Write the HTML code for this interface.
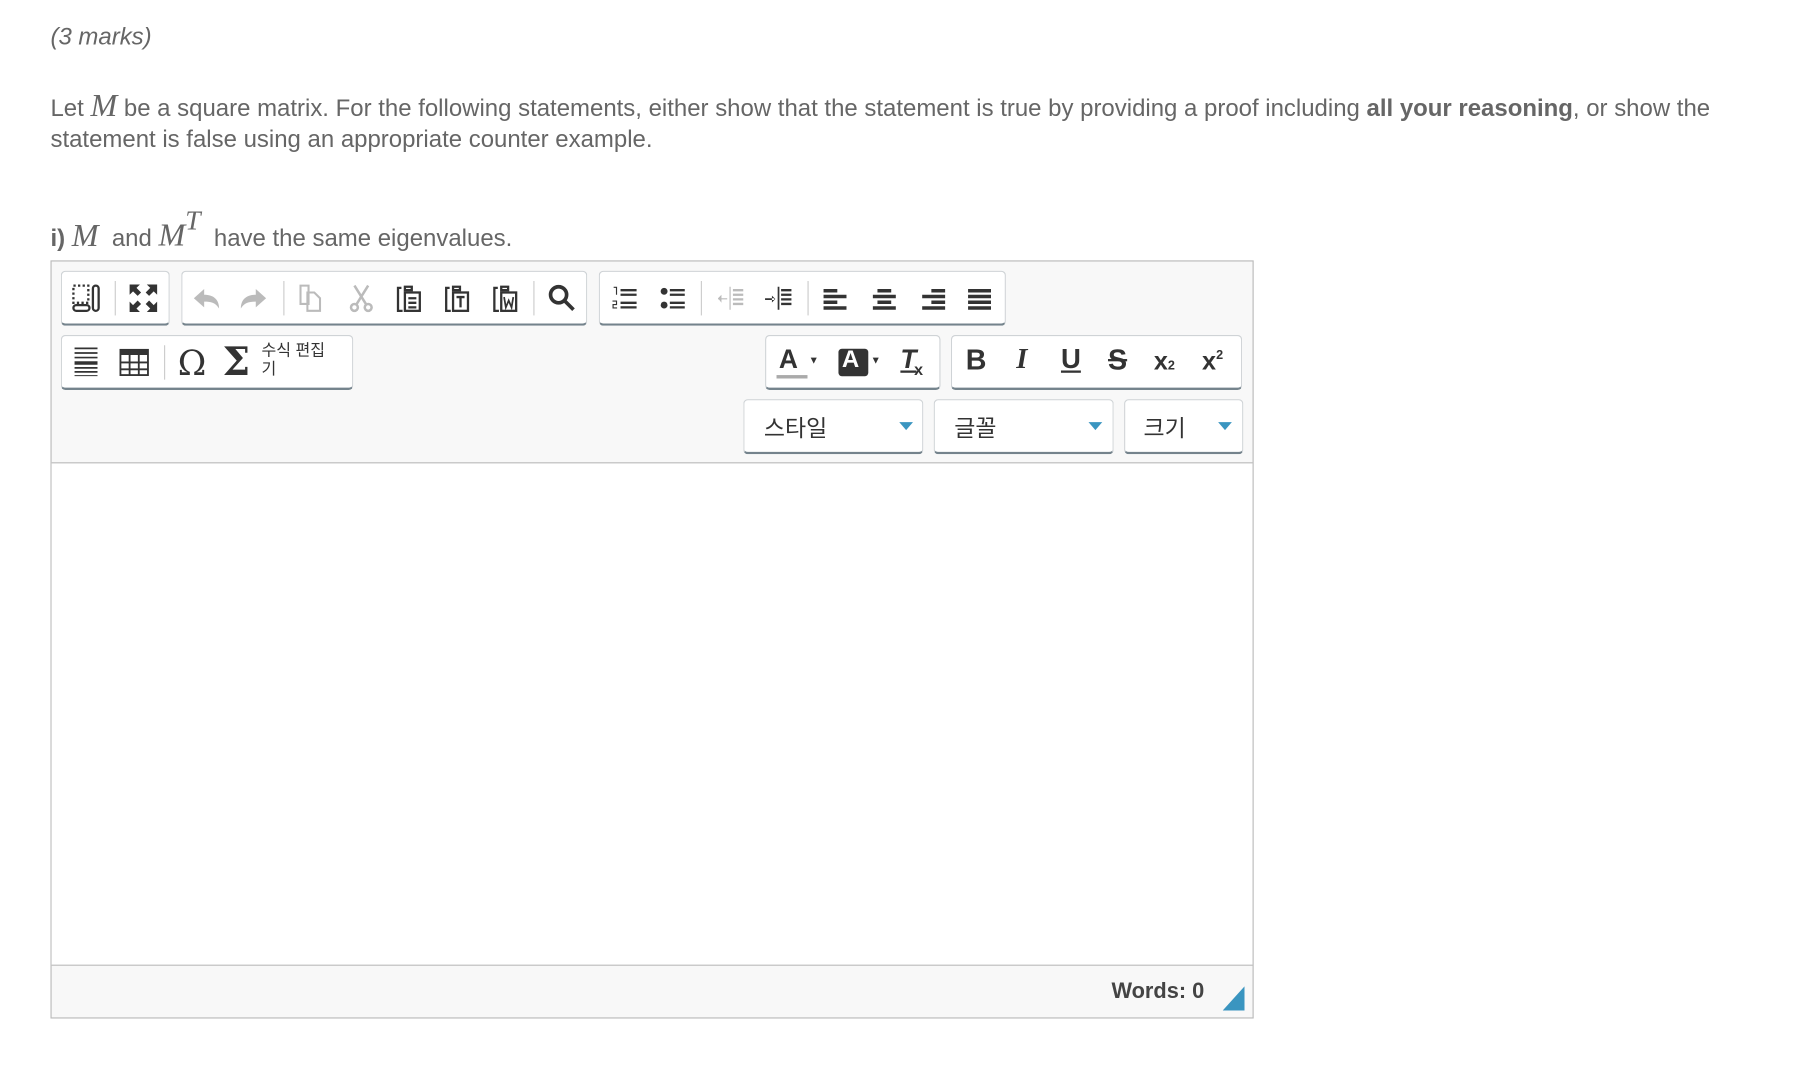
<!DOCTYPE html>
<html><head><meta charset="utf-8">
<style>
html,body{margin:0;padding:0;background:#fff;width:1798px;height:1068px;overflow:hidden}
#w{position:absolute;left:0;top:0;width:1570px;height:931px;transform:scale(1.147);transform-origin:0 0;font-family:"Liberation Sans","Noto Sans CJK KR",sans-serif;color:#666}
.t{position:absolute;font-size:20.9px;white-space:nowrap}
.m{font-family:"Liberation Serif",serif;font-style:italic;font-size:28px}
#ed{position:absolute;left:44px;top:227px;width:1047px;height:659px;border:1px solid #bbb;background:#f8f8f8}
#ct{position:absolute;top:403px;height:437px;background:#fff;border-top:1px solid #bbb;border-bottom:1px solid #bbb;left:45px;width:1047px}
.g{position:absolute;background:#fff;border:1px solid #cfd3d6;border-bottom:2px solid #74838c;border-radius:4px;box-sizing:border-box}
.i{position:absolute;width:26px;height:26px}
.sep{position:absolute;width:1px;height:30px;background:#ccc}
.k{position:absolute;font-size:20px;color:#333;font-family:"Liberation Sans","Noto Sans CJK KR",sans-serif}
.tri{position:absolute;width:0;height:0;border-left:6px solid transparent;border-right:6px solid transparent;border-top:7px solid #3a95c0}
</style></head><body><div id="w">
<div class="t" style="left:44px;top:21px;font-style:italic">(3 marks)</div>
<div class="t" style="left:44px;top:77px">Let <span class="m">M</span> be a square matrix. For the following statements, either show that the statement is true by providing a proof including <b>all your reasoning</b>, or show the</div>
<div class="t" style="left:44px;top:110px">statement is false using an appropriate counter example.</div>
<div class="t" style="left:44px;top:184px"><b>i)</b> <span class="m">M</span>&nbsp; and <span class="m">M<sup style="font-size:24px;position:relative;top:-4px">T</sup></span>&nbsp; have the same eigenvalues.</div>

<div id="ed"></div>
<div id="ct"></div>

<div class="g" style="left:53px;top:236px;width:95px;height:48px"></div>
<div class="g" style="left:158px;top:236px;width:354px;height:48px"></div>
<div class="g" style="left:522px;top:236px;width:355px;height:48px"></div>
<div class="g" style="left:53px;top:292px;width:255px;height:48px"></div>
<div class="g" style="left:667px;top:292px;width:153px;height:48px"></div>
<div class="g" style="left:829px;top:292px;width:254px;height:48px"></div>
<div class="g" style="left:648px;top:348px;width:157px;height:48px"></div>
<div class="g" style="left:814px;top:348px;width:157px;height:48px"></div>
<div class="g" style="left:980px;top:348px;width:104px;height:48px"></div>

<div class="sep" style="left:100px;top:245px"></div>
<div class="sep" style="left:247px;top:245px"></div>
<div class="sep" style="left:465px;top:245px"></div>
<div class="sep" style="left:611px;top:245px"></div>
<div class="sep" style="left:704px;top:245px"></div>
<div class="sep" style="left:143px;top:301px"></div>

<!-- row1 -->
<svg class="i" style="left:62px;top:247px" viewBox="0 0 26 26" fill="none" stroke="#333" stroke-width="2"><rect x="2" y="2" width="13" height="15" stroke-dasharray="2 2"/><rect x="2" y="19" width="14" height="5" rx="2.5"/><rect x="19" y="2" width="5" height="22" rx="2.5"/></svg>
<svg class="i" style="left:112px;top:247px" viewBox="0 0 26 26" fill="#333"><path d="M1 1h9l-3 3 4 4-3 3-4-4-3 3zM25 1v9l-3-3-4 4-3-3 4-4-3-3zM1 25v-9l3 3 4-4 3 3-4 4 3 3zM25 25h-9l3-3-4-4 3-3 4 4 3-3z"/></svg>
<svg class="i" style="left:167px;top:247px" viewBox="0 0 26 26" fill="#bbb"><path d="M2 13l9-8v5c8 0 13 4 13 12-3-5-7-6-13-6v5z"/></svg>
<svg class="i" style="left:208px;top:247px" viewBox="0 0 26 26" fill="#bbb"><path d="M24 13l-9-8v5c-8 0-13 4-13 12 3-5 7-6 13-6v5z"/></svg>
<svg class="i" style="left:258px;top:247px" viewBox="0 0 26 26" fill="none" stroke="#bbb" stroke-width="1.8"><path d="M4 2h7v16H4zM10 8h6l5 5v11H10z"/></svg>
<svg class="i" style="left:302px;top:247px" viewBox="0 0 26 26" fill="none" stroke="#bbb" stroke-width="2.2"><path d="M7 2l10 16M19 2L9 18"/><circle cx="7" cy="21" r="3"/><circle cx="19" cy="21" r="3"/></svg>
<svg class="i" style="left:344px;top:247px" viewBox="0 0 26 26" fill="none" stroke="#333" stroke-width="2"><path d="M6 4H3v20h4M9 3h6v3H9z"/><rect x="9" y="8" width="13" height="16"/><path d="M12 13h7M12 17h7M12 21h7"/></svg>
<svg class="i" style="left:386px;top:247px" viewBox="0 0 26 26" fill="none" stroke="#333" stroke-width="2"><path d="M6 4H3v20h4M9 3h6v3H9z"/><rect x="9" y="8" width="13" height="16"/><path d="M12 12h7M15.5 12v9"/></svg>
<svg class="i" style="left:428px;top:247px" viewBox="0 0 26 26" fill="none" stroke="#333" stroke-width="2"><path d="M6 4H3v20h4M9 3h6v3H9z"/><rect x="9" y="8" width="13" height="16"/><path d="M11.5 12l1.5 9 2.5-6 2.5 6 1.5-9" stroke-width="1.5"/></svg>
<svg class="i" style="left:477px;top:247px" viewBox="0 0 26 26" fill="none" stroke="#333" stroke-width="3.2"><circle cx="10" cy="10" r="7"/><path d="M15 15l8 8"/></svg>
<svg class="i" style="left:532px;top:247px" viewBox="0 0 26 26" fill="#333"><path d="M3 3h3v7H5V4H3zM9 5h14v2H9zM9 9h14v2H9zM2 15h4v4H3v2h3v1H2v-4h3v-2H2zM9 16h14v2H9zM9 20h14v2H9z"/></svg>
<svg class="i" style="left:574px;top:247px" viewBox="0 0 26 26" fill="#333"><circle cx="5" cy="7" r="3"/><circle cx="5" cy="19" r="3"/><path d="M10 5h13v2H10zM10 9h13v2H10zM10 16h13v2H10zM10 20h13v2H10z"/></svg>
<svg class="i" style="left:624px;top:247px" viewBox="0 0 26 26" fill="#bbb"><path d="M12 3h1v20h-1zM15 5h9v2h-9zM15 9h9v2h-9zM15 13h9v2h-9zM15 17h9v2h-9zM2 13h8v1H2zM2 13l3-3v7z"/></svg>
<svg class="i" style="left:666px;top:247px" viewBox="0 0 26 26" fill="#333"><path d="M12 3h1.5v20H12zM15 5h9v2h-9zM15 9h9v2h-9zM15 13h9v2h-9zM15 17h9v2h-9zM1 13h8v1.5H1zM10 13.7l-3-3v6z"/></svg>
<svg class="i" style="left:716px;top:247px" viewBox="0 0 26 26" fill="#333"><path d="M2 5h12v3H2zM2 10h20v3H2zM2 15h12v3H2zM2 20h20v3H2z"/></svg>
<svg class="i" style="left:758px;top:247px" viewBox="0 0 26 26" fill="#333"><path d="M7 5h12v3H7zM3 10h20v3H3zM7 15h12v3H7zM3 20h20v3H3z"/></svg>
<svg class="i" style="left:800px;top:247px" viewBox="0 0 26 26" fill="#333"><path d="M12 5h12v3H12zM4 10h20v3H4zM12 15h12v3H12zM4 20h20v3H4z"/></svg>
<svg class="i" style="left:841px;top:247px" viewBox="0 0 26 26" fill="#333"><path d="M3 5h20v3H3zM3 10h20v3H3zM3 15h20v3H3zM3 20h20v3H3z"/></svg>

<!-- row2 -->
<svg class="i" style="left:62px;top:302px" viewBox="0 0 26 26" fill="#333"><path d="M3 1h20v1.5H3zM3 5h20v1.5H3zM3 9h20v1.5H3zM3 13h20v3H3zM3 18h20v1.5H3zM3 21.5h20v1.5H3zM3 25h20v1H3z"/></svg>
<svg class="i" style="left:104px;top:303px" viewBox="0 0 26 26" fill="none" stroke="#333" stroke-width="1.6"><rect x="1" y="2" width="24" height="22"/><path d="M1 4h24" stroke-width="5"/><path d="M1 13h24M1 19h24M9 2v22M17 2v22"/></svg>
<div class="k" style="left:155px;top:300px;font-size:30px;font-family:'DejaVu Serif',serif">Ω</div>
<div class="k" style="left:194px;top:296px;font-size:34px;font-weight:bold;font-family:'DejaVu Serif',serif">Σ</div>
<div class="k" style="left:228px;top:297px;font-size:14px;line-height:16px">수식 편집<br>기</div>

<div class="k" style="left:679px;top:300px;font-weight:bold;font-size:23px">A</div>
<div style="position:absolute;left:677px;top:327px;width:27px;height:3px;background:#aaa"></div>
<div class="k" style="left:705px;top:309px;font-size:9px">▼</div>
<div style="position:absolute;left:731px;top:304px;width:26px;height:24px;background:#333;border-radius:3px"></div>
<div class="k" style="left:734px;top:302px;font-weight:bold;font-size:21px;color:#fff">A</div>
<div class="k" style="left:759px;top:309px;font-size:9px">▼</div>
<div class="k" style="left:785px;top:300px;font-weight:bold;font-style:italic;font-size:23px;text-decoration:underline">T</div>
<div class="k" style="left:797px;top:314px;font-weight:bold;font-size:14px">x</div>

<div class="k" style="left:842px;top:300px;font-weight:bold;font-size:25px">B</div>
<div class="k" style="left:886px;top:300px;font-weight:bold;font-style:italic;font-size:25px;font-family:'Liberation Serif',serif">I</div>
<div class="k" style="left:925px;top:300px;font-weight:bold;font-size:24px;text-decoration:underline">U</div>
<div class="k" style="left:966px;top:300px;font-weight:bold;font-size:25px;text-decoration:line-through">S</div>
<div class="k" style="left:1006px;top:302px;font-weight:bold;font-size:22px">x<span style="font-size:11px">2</span></div>
<div class="k" style="left:1048px;top:302px;font-weight:bold;font-size:22px">x<sup style="font-size:11px;vertical-align:9px">2</sup></div>

<!-- combos -->
<div class="k" style="left:666px;top:357px">스타일</div>
<div class="tri" style="left:784px;top:368px"></div>
<div class="k" style="left:832px;top:357px">글꼴</div>
<div class="tri" style="left:949px;top:368px"></div>
<div class="k" style="left:997px;top:357px">크기</div>
<div class="tri" style="left:1062px;top:368px"></div>

<div class="t" style="left:969px;top:854px;color:#444;font-weight:bold;font-size:19px">Words: 0</div>
<svg style="position:absolute;left:1066px;top:860px" width="20" height="21"><path d="M19 0V21H0z" fill="#3a95c0"/></svg>
</div></body></html>
